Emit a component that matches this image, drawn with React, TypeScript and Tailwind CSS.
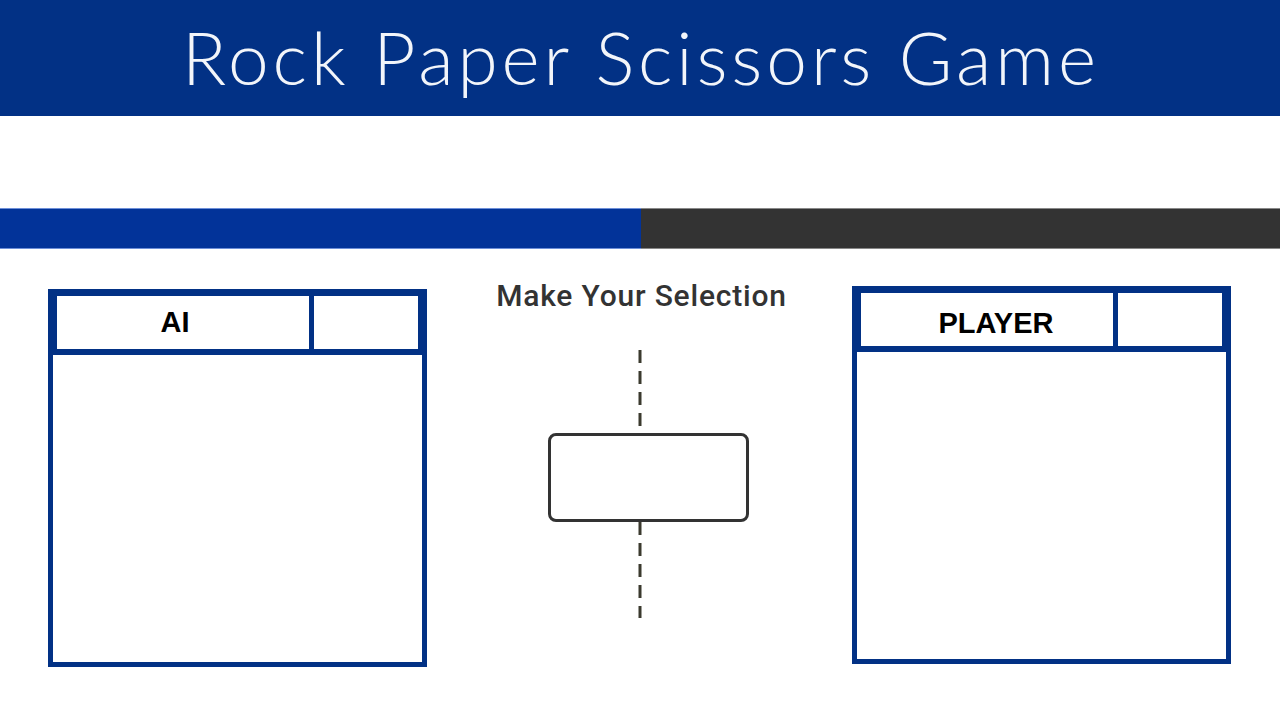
const blue = "border-[#023185]";

function PlayerBox({ label, shift }: { label: string; shift: string }) {
  return (
    <div className={`flex h-[378px] w-[379px] flex-col border-[5px] ${blue} bg-white`}>
      <div className="flex gap-[5px] bg-[#023185] px-[4px] pb-[6px] pt-[2px]">
        <div
          className={`flex h-[53px] flex-1 items-center justify-center bg-white text-[29px] font-bold text-black ${shift}`}
          style={{ fontFamily: '"Liberation Sans", Arial, sans-serif' }}
        >
          {label}
        </div>
        <div className="h-[53px] w-[104px] bg-white" />
      </div>
      <div className="flex-1 bg-white" />
    </div>
  );
}

function DashedLine({ height }: { height: number }) {
  return (
    <svg width="4" height={height} className="block">
      <line
        x1="2"
        y1="0"
        x2="2"
        y2={height}
        stroke="#3b3a2e"
        strokeWidth="3"
        strokeDasharray="13 8"
      />
    </svg>
  );
}

export default function App() {
  return (
    <div className="h-[720px] w-[1280px] overflow-hidden bg-white">
      <header className="flex h-[116px] items-center justify-center bg-[#023185]">
        <h1
          className="pb-[2px] pl-[2px] text-[73px] font-light leading-none tracking-[3.9px] text-[#f2f5fa]"
          style={{ fontFamily: 'Lato, "Open Sans", sans-serif' }}
        >
          Rock Paper Scissors Game
        </h1>
      </header>

      <div className="mt-[92px] flex h-[41px]">
        <div className="w-[641px] border-y border-[#6d8fd8] bg-[#023399]" />
        <div className="flex-1 border-y border-[#888] bg-[#333333]" />
      </div>

      <main className="flex items-start pl-[48px] pr-[49px]">
        <div className="mt-[40px]">
          <PlayerBox label="AI" shift="pr-[16px]" />
        </div>

        <div className="flex flex-1 flex-col items-center pt-[28px]">
          <h2
            className="pl-[4px] text-[30px] font-medium leading-[38px] tracking-[0.8px] text-[#333]"
            style={{ fontFamily: 'Roboto, "Open Sans", sans-serif' }}
          >
            Make Your Selection
          </h2>
          <div className="mt-[35px]">
            <DashedLine height={83} />
          </div>
          <div className="ml-[18px] h-[89px] w-[201px] rounded-[8px] border-[3px] border-[#333]" />
          <DashedLine height={96} />
        </div>

        <div className="mt-[37px]">
          <PlayerBox label="PLAYER" shift="pl-[18px] pt-[8px]" />
        </div>
      </main>
    </div>
  );
}
